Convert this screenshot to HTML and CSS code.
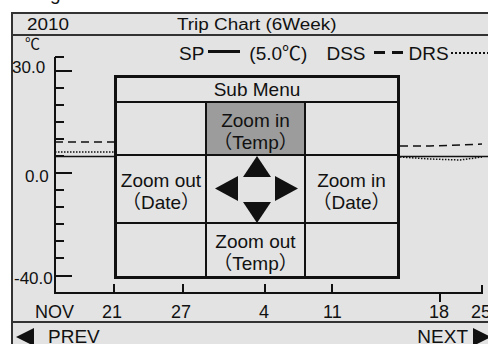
FILE: index.html
```html
<!DOCTYPE html>
<html>
<head>
  <title>Trip Chart</title>
  <link rel="stylesheet" href="styles.css">
</head>
<body>

  <div class="caption"><span>g</span></div>

  <div class="screen">
    <div class="head">
      <span class="year">2010</span>
      <span class="title">Trip Chart (6Week)</span>
    </div>

    <div class="chart">
      <svg class="plot" width="475" height="285" viewBox="13 36 475 285">
        <text class="unit" x="25" y="49">℃</text>

        <!-- data lines, the menu covers the middle -->
        <path class="line" d="M55 156.5H488" />
        <path class="line dashed" d="M55 142H114M400 146L430 146L460 145L482 144" />
        <path class="line dotted" d="M55 152H114M400 157L430 159L460 160L482 157" />

        <!-- axes -->
        <path class="axis" d="M55 57V293H482V285" />
        <path class="axis" d="M55 57H64M55 71H72M55 88H64M55 105H64M55 122H64M55 139H64M55 156H64M55 173H72M55 190H64M55 207H64M55 224H64M55 241H64M55 258H64M55 276H72" />
        <path class="axis" d="M114 293V284M183 293V284M265 293V284M332 293V284M440 293V302" />

        <text class="ylab" x="12" y="73">30.0</text>
        <text class="ylab" x="25" y="182">0.0</text>
        <text class="ylab" x="14" y="284">-40.0</text>

        <text class="xlab" x="35" y="318">NOV</text>
        <text class="xlab" x="102" y="318">21</text>
        <text class="xlab" x="171" y="318">27</text>
        <text class="xlab" x="259" y="318">4</text>
        <text class="xlab" x="323" y="318">11</text>
        <text class="xlab" x="429" y="318">18</text>
        <text class="xlab" x="471" y="318">25</text>
      </svg>

      <div class="legend">
        <span class="name sp">SP</span>
        <i class="key solid"></i>
        <span class="name setp">(5.0℃)</span>
        <span class="name dss">DSS</span>
        <i class="key dash"></i>
        <span class="name drs">DRS</span>
        <i class="key dots"></i>
      </div>

      <div class="menu">
        <div class="cell caption-cell">Sub Menu</div>
        <div class="cell"></div>
        <div class="cell text selected">Zoom in<br>（Temp）</div>
        <div class="cell"></div>
        <div class="cell text">Zoom out<br>（Date）</div>
        <div class="cell pad">
          <svg width="97" height="68" viewBox="0 0 97 68">
            <polygon points="50,1 64,22 36,22" />
            <polygon points="31,21 8,33.5 31,46" />
            <polygon points="68,21 91,33.5 68,46" />
            <polygon points="36,47 64,47 50,68" />
          </svg>
        </div>
        <div class="cell text">Zoom in<br>（Date）</div>
        <div class="cell"></div>
        <div class="cell text">Zoom out<br>（Temp）</div>
        <div class="cell"></div>
      </div>
    </div>

    <div class="foot">
      <span class="nav prev">
        <svg width="18" height="18" viewBox="0 0 18 18"><polygon points="18,0 0,9 18,18" /></svg>
        PREV
      </span>
      <span class="nav next">
        NEXT
        <svg width="18" height="18" viewBox="0 0 18 18"><polygon points="0,0 18,9 0,18" /></svg>
      </span>
    </div>
  </div>

</body>
</html>
```

FILE: styles.css
```css
body {
  margin: 0;
  width: 488px;
  height: 344px;
  overflow: hidden;
  background: #ffffff;
  font-family: "Liberation Sans", "Noto Sans CJK SC", sans-serif;
  color: #111;
}

.caption {
  height: 12px;
  overflow: hidden;
  padding-left: 50px;
  font-size: 19px;
}

.caption span {
  display: block;
  margin-top: -17px;
}

.screen {
  margin-left: 11px;
  border-left: 2px solid #333;
  border-top: 2px solid #333;
  background: #e3e3e3;
  height: 332px;
}

/* header text is drawn wide, like the device font */
.head {
  height: 20px;
  border-bottom: 2px solid #333;
  display: flex;
  font-size: 16px;
  line-height: 22px;
  overflow: hidden;
}

.head span {
  display: inline-block;
  transform: scaleX(1.18);
  transform-origin: left center;
}

.year {
  margin-left: 14px;
}

.title {
  margin-left: 114px;
}

.chart {
  position: relative;
  height: 285px;
}

.plot {
  display: block;
  overflow: visible;
}

.unit {
  font-size: 15px;
  fill: #111;
}

.legend {
  position: absolute;
  top: 7px;
  left: 0;
  right: 0;
  display: flex;
  font-size: 19px;
  line-height: 22px;
  white-space: nowrap;
}

.sp {
  margin-left: 166px;
}

.key {
  display: block;
  flex: none;
}

.key.solid {
  width: 32px;
  height: 3px;
  margin: 7px 0 0 4px;
  background: #111;
}

.setp {
  margin-left: 9px;
}

.dss {
  margin-left: 19px;
}

.key.dash {
  width: 30px;
  height: 3px;
  margin: 8px 0 0 8px;
  background: repeating-linear-gradient(90deg, #111 0 11px, transparent 11px 18px);
}

.drs {
  margin-left: 5px;
}

.key.dots {
  width: 40px;
  height: 2px;
  margin: 9px 0 0 2px;
  background: repeating-linear-gradient(90deg, #111 0 2px, transparent 2px 4px);
}

.line {
  fill: none;
  stroke: #111;
  stroke-width: 1.5;
}

.dashed {
  stroke-dasharray: 8 5;
}

.dotted {
  stroke-dasharray: 1.5 1.5;
}

.axis {
  fill: none;
  stroke: #111;
  stroke-width: 2;
}

.ylab {
  font-size: 17px;
  fill: #111;
}

.xlab {
  font-size: 18px;
  fill: #111;
}

.menu {
  position: absolute;
  left: 101px;
  top: 39px;
  border: 3px solid #111;
  background: #111;
  display: grid;
  grid-template-columns: 88px 97px 91px;
  grid-template-rows: 23px 51px 66px 52px;
  gap: 2px;
  font-size: 19px;
  line-height: 22px;
}

.cell {
  background: #e3e3e3;
  display: flex;
  align-items: center;
  justify-content: center;
  text-align: center;
}

.cell.text {
  padding-top: 6px;
}

.caption-cell {
  grid-column: 1 / 4;
}

.cell.selected {
  background: #9c9c9c;
}

.pad svg {
  display: block;
  overflow: visible;
  fill: #111;
}

.foot {
  border-top: 2px solid #333;
  display: flex;
  justify-content: space-between;
  font-size: 19px;
  line-height: 22px;
  padding-top: 3px;
}

.nav {
  display: flex;
  align-items: center;
}

.prev {
  margin-left: 3px;
  gap: 14px;
}

.next {
  margin-right: -3px;
  gap: 5px;
}

.nav svg {
  fill: #111;
}
```
